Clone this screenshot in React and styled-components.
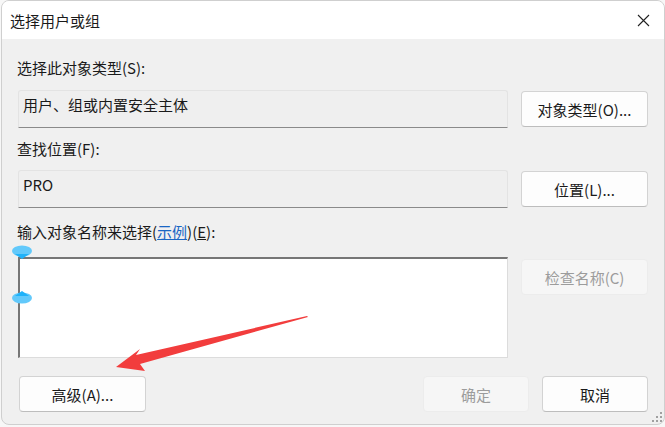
import React from "react";
import styled, { createGlobalStyle } from "styled-components";

const GlobalStyle = createGlobalStyle`
  html, body {
    margin: 0;
    padding: 0;
    background: #f7f7f7;
    font-family: "Noto Sans CJK SC", "Noto Sans", sans-serif;
    color: #1a1a1a;
  }
`;

const Window = styled.div`
  position: relative;
  width: 662px;
  height: 423px;
  margin-left: 1px;
  border: 1px solid #cfcfcf;
  border-radius: 8px;
  overflow: hidden;
  background: #f0f0f0;
  display: flex;
  flex-direction: column;
`;

const TitleBar = styled.div`
  height: 38px;
  flex-shrink: 0;
  background: #ffffff;
  display: flex;
  align-items: center;
  justify-content: space-between;
  padding: 0 14px 0 8px;
  font-size: 15px;
`;

const Body = styled.div`
  flex: 1;
  display: grid;
  grid-template-columns: 491px 127px;
  column-gap: 13px;
  align-content: start;
  padding: 19px 0 0 15px;
`;

const Label = styled.div`
  grid-column: 1 / span 2;
  font-size: 15px;
  line-height: 20px;
  height: 20px;
  margin-top: ${(p) => p.top}px;
  margin-bottom: ${(p) => p.bottom}px;
`;

const Field = styled.div`
  margin-left: 1px;
  height: 38px;
  box-sizing: border-box;
  background: #efefef;
  border: 1px solid #e3e3e3;
  border-bottom: 1px solid #8a8a8a;
  border-radius: 3px 3px 0 0;
  padding: 4px 0 0 4px;
  font-size: 15px;
  line-height: 20px;
`;

const TextArea = styled.div`
  margin-left: 1px;
  height: 101px;
  box-sizing: border-box;
  background: #ffffff;
  border-top: 2px solid #767676;
  border-left: 2px solid #767676;
  border-right: 1px solid #dcdcdc;
  border-bottom: 1px solid #dcdcdc;
`;

const Button = styled.div`
  height: 36px;
  width: ${(p) => p.w || 127}px;
  box-sizing: border-box;
  margin-top: ${(p) => p.top || 1}px;
  display: flex;
  align-items: center;
  justify-content: center;
  font-size: 15px;
  border-radius: 4px;
  background: ${(p) => (p.disabled ? "#f6f6f6" : "#fdfdfd")};
  color: ${(p) => (p.disabled ? "#9c9c9c" : "#1a1a1a")};
  border: 1px solid ${(p) => (p.disabled ? "#ececec" : "#d3d3d3")};
  border-bottom-color: ${(p) => (p.disabled ? "#ececec" : "#bdbdbd")};
`;

const Footer = styled.div`
  grid-column: 1 / span 2;
  display: flex;
  align-items: center;
  margin-top: 17px;
  margin-left: 2px;
  gap: 13px;
`;

const Spacer = styled.div`
  flex: 1;
`;

const Link = styled.span`
  color: #1a66c4;
  text-decoration: underline;
`;

const Key = styled.span`
  text-decoration: underline;
`;

const Overlay = styled.svg`
  position: absolute;
  left: 0;
  top: 0;
  pointer-events: none;
`;

const Grip = styled.svg`
  position: absolute;
  right: 2px;
  bottom: 2px;
`;

export default function App() {
  return (
    <>
      <GlobalStyle />
      <Window>
        <TitleBar>
          <span>选择用户或组</span>
          <svg width="13" height="13" viewBox="0 0 13 13">
            <path d="M1 1 L12 12 M12 1 L1 12" stroke="#222" strokeWidth="1.1" />
          </svg>
        </TitleBar>
        <Body>
          <Label top={0} bottom={12}>选择此对象类型(S):</Label>
          <Field>用户、组或内置安全主体</Field>
          <Button>对象类型(O)...</Button>

          <Label top={11} bottom={11}>查找位置(F):</Label>
          <Field>PRO</Field>
          <Button>位置(L)...</Button>

          <Label top={14} bottom={15}>
            输入对象名称来选择(<Link>示例</Link>)(<Key>E</Key>):
          </Label>
          <TextArea />
          <Button disabled top={2}>检查名称(C)</Button>

          <Footer>
            <Button w={127} top={0}>高级(A)...</Button>
            <Spacer />
            <Button w={106} top={0} disabled>确定</Button>
            <Button w={106} top={0}>取消</Button>
          </Footer>
        </Body>

        <Overlay width="664" height="424" viewBox="0 0 664 424">
          <path
            d="M305 315 L134 354 L138 348 L114 366 L143 370 L138 363 L306 316 Z"
            fill="#f23d3d"
          />
          <ellipse cx="20" cy="250" rx="10" ry="5.5" fill="#62c9fb" />
          <path d="M13 253 L27 253 L20 258 Z" fill="#1fb2fa" />
          <ellipse cx="20" cy="297" rx="10" ry="5.5" fill="#62c9fb" />
          <path d="M13 295 L27 295 L20 290 Z" fill="#1fb2fa" />
        </Overlay>
        <Grip width="10" height="10" viewBox="0 0 10 10">
          <g fill="#a0a0a0">
            <rect x="8" y="0" width="2" height="2" />
            <rect x="4" y="4" width="2" height="2" />
            <rect x="8" y="4" width="2" height="2" />
            <rect x="0" y="8" width="2" height="2" />
            <rect x="4" y="8" width="2" height="2" />
            <rect x="8" y="8" width="2" height="2" />
          </g>
        </Grip>
      </Window>
    </>
  );
}
